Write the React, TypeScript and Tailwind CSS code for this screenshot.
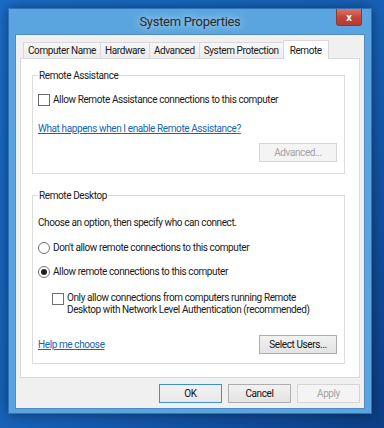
import React from 'react';

const font = { fontFamily: 'Roboto, "Liberation Sans", sans-serif' };

const TABS = ['Computer Name', 'Hardware', 'Advanced', 'System Protection'];

function Checkbox() {
  return <span className="inline-block w-[12px] h-[12px] shrink-0 border border-[#6f6f6f] bg-white" />;
}

function Radio({ checked = false }: { checked?: boolean }) {
  return (
    <span className="inline-flex w-[12px] h-[12px] shrink-0 rounded-full border border-[#6f6f6f] bg-white items-center justify-center">
      {checked && <span className="block w-[6px] h-[6px] rounded-full bg-[#222]" />}
    </span>
  );
}

function Button({ children, disabled, primary, wide }: { children: React.ReactNode; disabled?: boolean; primary?: boolean; wide?: boolean }) {
  const cls = disabled
    ? 'border-[#d6d6d6] bg-[#f4f4f4] text-[#a3a3a3]'
    : primary
      ? 'border-[#3d8ed2] bg-gradient-to-b from-[#f2f2f2] to-[#e8e8e8] text-[#111]'
      : 'border-[#adadad] bg-gradient-to-b from-[#f2f2f2] to-[#e3e3e3] text-[#111]';
  return (
    <button
      className={`h-[19px] ${wide ? 'w-[78px]' : 'w-[63px]'} shrink-0 border text-[10px] tracking-[-0.4px] leading-none flex items-center justify-center whitespace-nowrap ${cls}`}
    >
      {children}
    </button>
  );
}

export default function App() {
  return (
    <div
      className="w-[384px] h-[428px] overflow-hidden bg-gradient-to-br from-[#1a6cc8] via-[#1762b8] to-[#0c3f86] pl-[8px] pt-[8px]"
      style={font}
    >
      {/* Window frame */}
      <div className="w-[364px] h-[406px] bg-[#5aa5df] border border-[#2f74b8] shadow-[0_0_12px_rgba(0,0,0,0.45)] flex flex-col px-[6px] pb-[4px]">
        {/* Title bar */}
        <div className="relative h-[25px] shrink-0 flex items-center justify-center">
          <span className="text-[13px] text-[#2b2b2b] tracking-[-0.3px] [text-shadow:0_0_8px_rgba(255,255,255,0.9)] pt-[1px]">
            System Properties
          </span>
          <div className="absolute right-[3px] top-0 w-[26px] h-[17px] rounded-b-[3px] bg-gradient-to-b from-[#d9766b] via-[#c4453a] to-[#b63a2f] border border-[#8e3a33] border-t-0 flex items-center justify-center">
            <span className="text-white text-[11px] font-bold leading-none">x</span>
          </div>
        </div>

        {/* Client area */}
        <div className="flex-1 bg-[#f0f0f0] border border-[#4f8cc6] flex flex-col px-[4px] pt-[4px] text-[10px] tracking-[-0.4px] text-[#1a1a1a]">
          {/* Tabs */}
          <div className="flex items-end h-[19px] pl-[3px] relative z-10">
            {TABS.map((t) => (
              <div
                key={t}
                className="h-[16px] px-[4px] border border-b-0 border-[#d9d9d9] -ml-px first:ml-0 bg-gradient-to-b from-[#f7f7f7] to-[#ececec] flex items-center whitespace-nowrap"
              >
                {t}
              </div>
            ))}
            <div className="h-[19px] px-[6px] border border-b-0 border-[#d9d9d9] -ml-px bg-white flex items-start pt-[2px] -mb-px">
              Remote
            </div>
          </div>

          {/* Tab panel */}
          <div className="h-[320px] bg-white border border-[#d9d9d9] pl-[11px] pr-[14px] pt-[9px] flex flex-col">
            <fieldset className="border border-[#dcdcdc] h-[106px] pl-[5px] pr-[7px]">
              <legend className="px-[1px] leading-[15px]">Remote Assistance</legend>
              <label className="flex items-center gap-[3px] mt-[9px]">
                <Checkbox />
                <span>Allow Remote Assistance connections to this computer</span>
              </label>
              <div className="mt-[14px]">
                <a className="text-[#1266b8] underline underline-offset-1">
                  What happens when I enable Remote Assistance?
                </a>
              </div>
              <div className="flex justify-end mt-[7px]">
                <Button disabled wide>Advanced...</Button>
              </div>
            </fieldset>

            <fieldset className="border border-[#dcdcdc] h-[176px] mt-[14px] pl-[5px] pr-[7px]">
              <legend className="px-[1px] leading-[15px]">Remote Desktop</legend>
              <p className="mt-[12px]">Choose an option, then specify who can connect.</p>
              <label className="flex items-center gap-[3px] mt-[10px]">
                <Radio />
                <span>Don't allow remote connections to this computer</span>
              </label>
              <label className="flex items-center gap-[3px] mt-[9px]">
                <Radio checked />
                <span>Allow remote connections to this computer</span>
              </label>
              <label className="flex items-start gap-[3px] mt-[13px] ml-[14px] leading-[12px]">
                <span className="mt-[1px]">
                  <Checkbox />
                </span>
                <span>
                  Only allow connections from computers running Remote
                  <br />
                  Desktop with Network Level Authentication (recommended)
                </span>
              </label>
              <div className="flex items-center justify-between mt-[19px]">
                <a className="text-[#1266b8] underline underline-offset-1">Help me choose</a>
                <Button wide>Select Users...</Button>
              </div>
            </fieldset>
          </div>

          {/* Dialog buttons */}
          <div className="flex justify-end gap-[6px] mt-[6px]">
            <Button primary>OK</Button>
            <Button>Cancel</Button>
            <Button disabled>Apply</Button>
          </div>
        </div>
      </div>
    </div>
  );
}
